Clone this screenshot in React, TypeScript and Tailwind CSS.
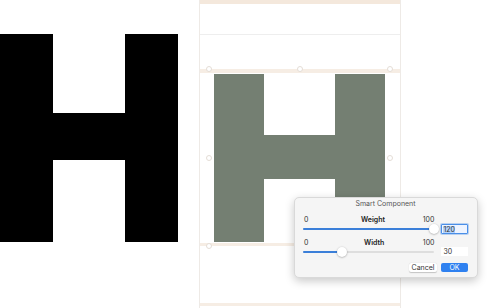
import React from 'react'

function GlyphH({ color, leg, counter, top, bar, bottom }: { color: string; leg: string; counter: string; top: string; bar: string; bottom: string }) {
  // H drawn as blocks: leg | (top counter, crossbar, bottom counter) | leg
  return (
    <div className="flex">
      <div className={`${leg} ${color}`} />
      <div className={`flex flex-col ${counter}`}>
        <div className={top} />
        <div className={`${bar} ${color}`} />
        <div className={bottom} />
      </div>
      <div className={`${leg} ${color}`} />
    </div>
  )
}

function Handle({ className }: { className: string }) {
  return <div className={`absolute w-[6px] h-[6px] rounded-full border border-[#e4ddd6] bg-white ${className}`} />
}

function Slider({ pct }: { pct: number }) {
  return (
    <div className="relative h-[10px] w-[131px]">
      <div className="absolute left-0 right-0 top-[4px] h-[2px] rounded-full bg-[#dedede]" />
      <div className="absolute left-0 top-[4px] h-[2px] rounded-full bg-[#3b7fd9]" style={{ width: `${pct}%` }} />
      <div
        className="absolute top-[0px] w-[10px] h-[10px] -ml-[5px] rounded-full bg-white shadow-[0_0.5px_2px_rgba(0,0,0,0.35)]"
        style={{ left: `${pct}%` }}
      />
    </div>
  )
}

export default function App() {
  return (
    <div className="relative w-[500px] h-[308px] bg-white overflow-hidden flex font-['Inter','Liberation_Sans',sans-serif]">
      {/* preview glyph */}
      <div className="w-[199px] pt-[34px]">
        <GlyphH color="bg-black" leg="w-[53px] h-[208px]" counter="w-[72px]" top="h-[79px]" bar="h-[47px]" bottom="h-[82px]" />
      </div>

      {/* edit view */}
      <div className="relative w-[202px] border-x border-[#eeeae6] flex flex-col">
        <div className="h-[4px] bg-[#f4e8dc]" />
        <div className="h-[30px]" />
        <div className="h-px bg-[#eeeeee]" />
        <div className="h-[34px]" />
        <div className="h-[4px] bg-[#f6ede4]" />
        <div className="h-[170px] pl-[14px] pt-[1px]">
          <GlyphH color="bg-[#747f72]" leg="w-[50px] h-[168px]" counter="w-[71px]" top="h-[61px]" bar="h-[44px]" bottom="h-[63px]" />
        </div>
        <div className="h-[3px] bg-[#f6ede4]" />
        <div className="h-[57px]" />
        <div className="h-[3px] bg-[#f6ede4]" />

        <Handle className="left-[6px] top-[66px]" />
        <Handle className="left-[97px] top-[66px]" />
        <Handle className="left-[187px] top-[66px]" />
        <Handle className="left-[6px] top-[155px]" />
        <Handle className="left-[187px] top-[155px]" />
        <Handle className="left-[6px] top-[243px]" />
      </div>

      {/* Smart Component dialog */}
      <div className="absolute left-[294px] top-[197px] w-[184px] h-[81px] rounded-[5px] bg-[#f5f5f5] border border-[#d9d9d9] shadow-[0_3px_10px_rgba(0,0,0,0.22)] pl-[8px] pr-[9px] text-[#333] text-[7px] leading-[8px]">
        <div className="pt-[2px] text-center text-[#555]">Smart Component</div>

        <div className="mt-[8px] flex items-end gap-[7px]">
          <div className="w-[134px]">
            <div className="relative h-[8px] flex">
              <span className="pl-[1px]">0</span>
              <span className="absolute left-[58px] font-semibold text-[#222]">Weight</span>
              <span className="ml-auto pr-[0px]">100</span>
            </div>
            <Slider pct={100} />
          </div>
          <div className="w-[27px] h-[10px] bg-[#eef4ff] border border-[#4a8fe8] rounded-[1px] shadow-[0_0_0_1px_rgba(74,143,232,0.35)] flex items-center pl-[1px]">
            <span className="bg-[#b4d3fb] leading-[7px]">120</span>
          </div>
        </div>

        <div className="mt-[5px] flex items-end gap-[7px]">
          <div className="w-[134px]">
            <div className="relative h-[8px] flex">
              <span className="pl-[1px]">0</span>
              <span className="absolute left-[61px] font-semibold text-[#222]">Width</span>
              <span className="ml-auto">100</span>
            </div>
            <Slider pct={30} />
          </div>
          <div className="w-[27px] h-[9px] mb-[1px] bg-white flex items-center pl-[2px]">30</div>
        </div>

        <div className="mt-[6px] flex justify-end gap-[4px]">
          <div className="w-[28px] h-[9px] rounded-[2px] bg-white shadow-[0_0.5px_1px_rgba(0,0,0,0.2)] flex items-center justify-center">Cancel</div>
          <div className="w-[27px] h-[9px] rounded-[2px] bg-[#2f81f0] text-white flex items-center justify-center">OK</div>
        </div>
      </div>
    </div>
  )
}
